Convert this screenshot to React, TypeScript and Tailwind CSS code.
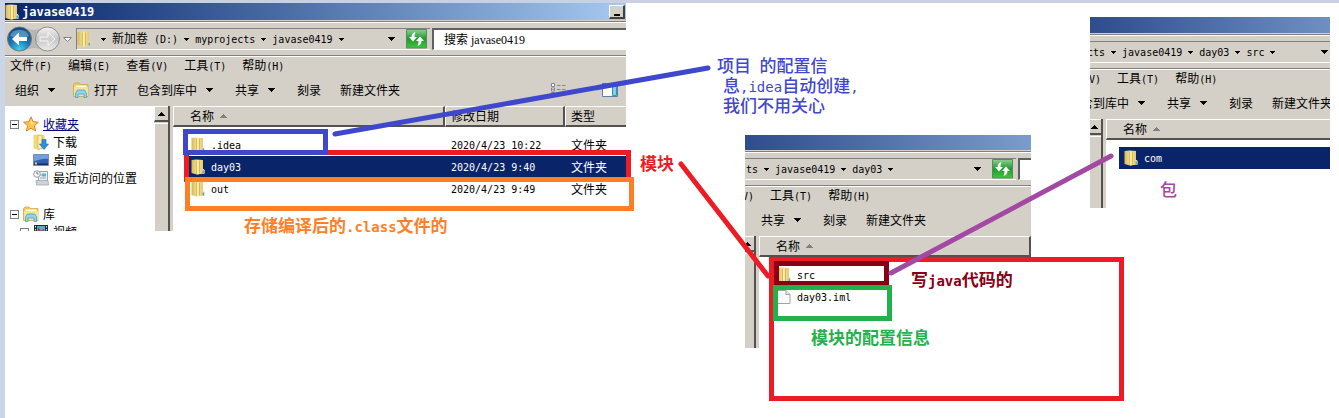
import { Fragment, ReactNode } from "react";

const CJK = "font-['Noto_Sans_CJK_SC',sans-serif]";

/* Latin runs are set in a half-width mono face beside full-width CJK. */
function T({ children, large = false }: { children: string; large?: boolean }) {
  const runs = children.split(/([\x20-\x7e]+)/).filter(Boolean);
  return (
    <>
      {runs.map((run, i) =>
        /^[\x20-\x7e]/.test(run) ? (
          <span
            key={i}
            className={
              large
                ? "whitespace-pre font-['DejaVu_Sans_Mono',monospace] text-[14px] leading-none"
                : "whitespace-pre font-['DejaVu_Sans_Mono',monospace] text-[10px]"
            }
          >
            {run}
          </span>
        ) : (
          <Fragment key={i}>{run}</Fragment>
        ),
      )}
    </>
  );
}

function Folder() {
  return (
    <svg width="14" height="16" viewBox="0 0 14 16" className="shrink-0" aria-hidden="true">
      <defs>
        <linearGradient id="folderBack" x1="0" x2="1">
          <stop offset="0" stopColor="#d9b950" />
          <stop offset="0.5" stopColor="#f8e9a0" />
          <stop offset="1" stopColor="#e2c25c" />
        </linearGradient>
        <linearGradient id="folderFace" x1="0" x2="1">
          <stop offset="0" stopColor="#fdf6c4" />
          <stop offset="1" stopColor="#e6c968" />
        </linearGradient>
      </defs>
      <path d="M.5 1 5 .5l7 .5v9l1.500 1v3.500L6 15.500l-2-.5-3.500-1z" fill="url(#folderBack)" />
      <path d="m5.500 1.500 6-.5v13l-5 1.500-1-1z" fill="url(#folderFace)" />
      <path d="M5.500 1.500v13.500M8.500 1.500V14.500" stroke="#c8a641" strokeWidth="0.7" />
      <path d="M11.500 9.500 13.500 11v3.500l-2 .5z" fill="#f3e8b4" />
      <path d="M11.500 11.500H13v3h-1.500z" fill="#4ea3da" />
    </svg>
  );
}

function OpenFolder() {
  return (
    <svg width="16" height="16" viewBox="0 0 16 16" className="shrink-0" aria-hidden="true">
      <path d="M.5 2.500 2 1h4l1.500 1.500H15v12H.5z" fill="#e9ca60" stroke="#c9a43c" strokeWidth="0.7" />
      <path d="M2.500 3.500h11V8h-11z" fill="#fffdf0" />
      <path d="M1 5h14v9H1z" fill="#f8e391" />
      <path d="M2.500 15.500V11l2-3h7l2 3v4.500H11V12H5v3.500z" fill="#8ed4f4" stroke="#3f97c8" strokeWidth="0.7" />
    </svg>
  );
}

function Star() {
  return (
    <svg width="16" height="16" viewBox="0 0 16 16" className="shrink-0" aria-hidden="true">
      <path
        d="m8 .8 2.100 4.900 5.300.5-4 3.500 1.200 5.300L8 12.200 3.400 15l1.200-5.300-4-3.500 5.300-.5z"
        fill="#ffc648"
        stroke="#e3822c"
      />
      <path d="m8 3 1.300 3.500 3.200.5L8 8.500z" fill="#ffe9a0" />
    </svg>
  );
}

function Downloads() {
  return (
    <svg width="16" height="16" viewBox="0 0 16 16" className="shrink-0" aria-hidden="true">
      <path d="M.5 1 5 .5l6.500.5v13.500L5 15.500l-4.500-1z" fill="#f0d978" />
      <path d="m5 1.500 4-.5v13.500l-4 1z" fill="#fbf0b0" stroke="#cdab46" strokeWidth="0.6" />
      <path d="M9 5.500h4V10h2.500L11 15.500 6.500 10H9z" fill="#2f91dd" stroke="#1766ad" strokeWidth="0.6" />
    </svg>
  );
}

function DesktopIcon() {
  return (
    <svg width="16" height="16" viewBox="0 0 16 16" className="shrink-0" aria-hidden="true">
      <path d="M.5 2.500h15v11H.5z" fill="#2f62b5" stroke="#7b8ba8" />
      <path d="M1 3h14v4C9 6 5 9 1 9z" fill="#6ea0df" />
      <path d="M1 11.500h14v1.500H1z" fill="#1b2f5c" />
      <path d="M2 10.500h2v2H2z" fill="#f6d442" />
    </svg>
  );
}

function Recent() {
  return (
    <svg width="16" height="16" viewBox="0 0 16 16" className="shrink-0" aria-hidden="true">
      <path d="M5.500 1.500h9v12h-9z" fill="#eef1f4" stroke="#9aa4ae" />
      <path d="M7 8h6M7 5h6" stroke="#7fa9cc" />
      <path d="M9 3.500h4v3H9z" fill="#62b0d8" />
      <path d="M3 10.500h12l.5 4.500H3.500z" fill="#cdd3d9" stroke="#98a1aa" strokeWidth="0.7" />
      <circle cx="4" cy="4" r="3.300" fill="#fff" stroke="#8f9aa5" />
      <path d="M4 2v2h1.500" stroke="#48525c" strokeWidth="0.8" fill="none" />
    </svg>
  );
}

function VideoIcon() {
  return (
    <svg width="16" height="16" viewBox="0 0 16 16" className="shrink-0" aria-hidden="true">
      <path d="M1 1h14v14H1z" fill="#23292e" />
      <path d="M4 2h8v12H4z" fill="#58a9cf" />
      <path d="m5 3 3 4 3-2v6H5z" fill="#a64336" />
      <path d="M2.500 2v13M13.500 2v13" stroke="#e6e6e6" strokeDasharray="1.500 1.500" />
    </svg>
  );
}

function Page() {
  return (
    <svg width="14" height="16" viewBox="0 0 14 16" className="shrink-0" aria-hidden="true">
      <path d="M.5 1.500H9l4 4v9H.5z" fill="#fafafa" stroke="#a3a3a3" />
      <path d="M9 1.500v4h4" fill="#e6e6e6" stroke="#a3a3a3" />
    </svg>
  );
}

function Caret({ size = "small" }: { size?: "small" | "big" }) {
  return size === "small" ? (
    <svg width="5" height="3" viewBox="0 0 5 3" className="shrink-0" shapeRendering="crispEdges" aria-hidden="true">
      <path d="M0 0h5v1H0zM1 1h3v1H1zM2 2h1v1H2z" />
    </svg>
  ) : (
    <svg width="7" height="4" viewBox="0 0 7 4" className="shrink-0" shapeRendering="crispEdges" aria-hidden="true">
      <path d="M0 0h7v1H0zM1 1h5v1H1zM2 2h3v1H2zM3 3h1v1H3z" />
    </svg>
  );
}

function UpArrow({ className }: { className: string }) {
  return (
    <svg width="7" height="4" viewBox="0 0 7 4" className={className} shapeRendering="crispEdges" aria-hidden="true">
      <path d="M3 0h1v1H3zM2 1h3v1H2zM1 2h5v1H1zM0 3h7v1H0z" fill="currentColor" />
    </svg>
  );
}

function NavButtons() {
  return (
    <div className="relative flex w-[71px] shrink-0 items-center pl-[2px]">
      <svg width="68" height="26" viewBox="0 0 68 26" aria-hidden="true" className="-my-1 shrink-0">
        <defs>
          <radialGradient id="orb" cx="0.5" cy="0.95" r="0.9">
            <stop offset="0" stopColor="#42d3f6" />
            <stop offset="0.5" stopColor="#1c76b4" />
            <stop offset="1" stopColor="#14477f" />
          </radialGradient>
          <linearGradient id="orbOff" x1="0" x2="0" y1="0" y2="1">
            <stop offset="0" stopColor="#f4f4f4" />
            <stop offset="0.5" stopColor="#c6c6c6" />
            <stop offset="1" stopColor="#ececec" />
          </linearGradient>
        </defs>
        <path d="M12 1c6 0 10 3 15 3S36 1 41 1v24c-5 0-9-3-14-3s-9 3-15 3z" fill="#b7b7b5" />
        <circle cx="12.500" cy="13" r="12" fill="url(#orb)" stroke="#6d7780" />
        <path d="M3 10a10 9 0 0 1 19 0q-9 4-19 0" fill="#8fc2e4" opacity="0.5" />
        <path d="M12 6.500 5 13l7 6.500v-4.500h8v-4h-8z" fill="#fff" />
        <circle cx="40.500" cy="13" r="12" fill="url(#orbOff)" stroke="#8d8d8d" />
        <path d="m41 6.500 7 6.500-7 6.500v-4.500h-8v-4h8z" fill="#d0d0d0" stroke="#f8f8f8" />
        <path d="M56.500 11.500h8l-4 4z" fill="#fff" stroke="#7d8792" />
      </svg>
      <button aria-label="后退" className="absolute left-[2px] size-6 rounded-full" />
      <button aria-label="前进" className="absolute left-[30px] size-6 rounded-full" />
    </div>
  );
}

function Refresh() {
  return (
    <button aria-label="刷新" className="mr-[3px] h-5 w-[21px] shrink-0">
      <svg width="21" height="20" viewBox="0 0 21 20" aria-hidden="true">
        <defs>
          <linearGradient id="green" x1="0" x2="0" y1="0" y2="1">
            <stop offset="0" stopColor="#8ed092" />
            <stop offset="0.5" stopColor="#1f9a2c" />
            <stop offset="1" stopColor="#3fc63d" />
          </linearGradient>
        </defs>
        <path d="M.5.5h20v18.500H.5z" fill="url(#green)" stroke="#5b8a5e" />
        <path d="M9.500 3Q5.500 4 5.500 8H3l4 4.500L11 8H8.500q0-2.500 1-5z" fill="#fff" />
        <path d="M11.500 17q4-1 4-5H18l-4-4.500-4 4.500h2.500q0 2.500-1 5z" fill="#fff" />
      </svg>
    </button>
  );
}

function Crumbs({ items }: { items: string[] }) {
  return (
    <nav className="flex items-center gap-[6px]">
      {items.map((item) => (
        <Fragment key={item}>
          <button className="whitespace-nowrap">
            <T>{item}</T>
          </button>
          <Caret />
        </Fragment>
      ))}
    </nav>
  );
}

/* Dark line over light line, the classic etched separator. */
function Etched() {
  return <div className="h-[2px] shrink-0 border-b border-white bg-[#808080]" />;
}

function MenuBar({ items, className = "pl-[5px]" }: { items: string[]; className?: string }) {
  return (
    <div className={`flex h-[18px] items-center gap-4 ${className}`}>
      {items.map((item) => (
        <button key={item} className="shrink-0 whitespace-nowrap">
          <T>{item}</T>
        </button>
      ))}
    </div>
  );
}

function Command({ label, menu = false, icon }: { label: string; menu?: boolean; icon?: ReactNode }) {
  return (
    <button
      className={
        menu
          ? "flex shrink-0 items-center gap-[9px] pr-[3px] whitespace-nowrap"
          : "flex shrink-0 items-center gap-[5px] whitespace-nowrap"
      }
    >
      {icon}
      {label}
      {menu && <Caret size="big" />}
    </button>
  );
}

function ScrollBar({ className }: { className: string }) {
  return (
    <div className={`flex shrink-0 flex-col items-end overflow-hidden border-r-2 border-[#55524e] bg-[#d4d0c8] ${className}`}>
      <button
        aria-label="向上滚动"
        className="flex h-4 w-[14px] shrink-0 items-center justify-center border-t border-b-2 border-l border-t-white border-b-[#55524e] border-l-white"
      >
        <UpArrow className="text-black" />
      </button>
      <div className="mt-px w-[14px] flex-1 border-t border-l border-white" />
    </div>
  );
}

type Row = { name: string; date?: string; type?: string; selected?: boolean; page?: boolean };

function FileTable({ rows, detailed = false, openEnd = false }: { rows: Row[]; detailed?: boolean; openEnd?: boolean }) {
  const head = "border-t border-b-2 border-l border-t-white border-b-[#55524e] border-l-white bg-[#d4d0c8] p-0 text-left font-normal";
  return (
    <div className="ml-[3px] min-w-0 flex-1 overflow-hidden bg-white">
      <table className="w-full table-fixed border-separate border-spacing-0">
        <thead>
          <tr className="h-[21px] leading-[18px]">
            <th className={openEnd ? head : `${head} border-r-2 border-r-[#55524e]`}>
              <span className="flex items-center gap-[6px] pl-4">
                名称
                <UpArrow className="text-[#808080]" />
              </span>
            </th>
            {detailed && (
              <>
                <th className={`${head} w-[120px] border-r-2 border-r-[#55524e] pl-[5px]`}>修改日期</th>
                <th className={`${head} w-[61px] pl-[5px]`}>类型</th>
              </>
            )}
          </tr>
        </thead>
        <tbody>
          <tr aria-hidden="true" className="h-[7px]">
            <td className="p-0" />
          </tr>
          {rows.map((row) => (
            <tr key={row.name} className={row.selected ? "h-[22px] text-white" : "h-[22px]"}>
              <td className="p-0 pl-[13px]">
                <span
                  className={
                    row.selected ? "flex h-[22px] items-center gap-[6px] bg-[#0a246a] pl-[5px]" : "flex h-[22px] items-center gap-[6px] pl-[5px]"
                  }
                >
                  {row.page ? <Page /> : <Folder />}
                  <span>
                    <T>{row.name}</T>
                  </span>
                </span>
              </td>
              {detailed && (
                <>
                  <td className={row.selected ? "bg-[#0a246a] p-0 pl-[6px]" : "p-0 pl-[6px]"}>
                    <T>{row.date ?? ""}</T>
                  </td>
                  <td className={row.selected ? "bg-[#0a246a] p-0 pl-[6px]" : "p-0 pl-[6px]"}>{row.type}</td>
                </>
              )}
            </tr>
          ))}
        </tbody>
      </table>
    </div>
  );
}

function Expander() {
  return (
    <svg width="9" height="9" viewBox="0 0 9 9" className="shrink-0" shapeRendering="crispEdges" aria-hidden="true">
      <path d="M.5.5h8v8h-8z" fill="#fff" stroke="#808080" />
      <path d="M2 4h5v1H2z" />
    </svg>
  );
}

function Sidebar() {
  const leaf = "flex h-[18px] items-center gap-1 pl-7";
  return (
    <aside className="w-[149px] shrink-0 overflow-hidden bg-white pt-[9px]">
      <ul>
        <li className="flex h-[18px] items-center gap-1 pl-[5px]">
          <Expander />
          <Star />
          <a href="#favorites" className="text-[#000080] underline">
            收藏夹
          </a>
        </li>
        <li className={leaf}>
          <Downloads />
          下载
        </li>
        <li className={leaf}>
          <DesktopIcon />
          桌面
        </li>
        <li className={leaf}>
          <Recent />
          最近访问的位置
        </li>
        <li className="mt-[18px] flex h-[18px] items-center gap-1 pl-[5px]">
          <Expander />
          <OpenFolder />
          库
        </li>
        <li className="flex h-[18px] items-center gap-1 pl-[15px]">
          <Expander />
          <VideoIcon />
          视频
        </li>
      </ul>
    </aside>
  );
}

function ViewIcons() {
  return (
    <div className="ml-auto flex items-center gap-9 pr-2">
      <button aria-label="更改视图">
        <svg width="16" height="14" viewBox="0 0 16 14" aria-hidden="true">
          <path d="M1.500.5h3v3h-3zM1.500 5h3v3h-3zM1.500 9.500h3v3h-3z" fill="#fff" stroke="#7a8794" />
          <path d="M7 2.500h3.500M12 2.500h3.500M7 6.500h3.500M12 6.500h3.500M7 11h3.500M12 11h3.500" stroke="#7a8794" />
          <path d="M2.500 6h1v1h-1z" fill="#c33" />
        </svg>
      </button>
      <button aria-label="显示预览窗格">
        <svg width="16" height="14" viewBox="0 0 16 14" aria-hidden="true">
          <path d="M.5.5h15v13H.5z" fill="#fff" stroke="#5b80a5" />
          <path d="M0 0h16v3H0z" fill="#4a7db5" />
          <path d="M10.500 3.500h4v9h-4z" fill="#7fd0ea" stroke="#3b8fb5" />
        </svg>
      </button>
    </div>
  );
}

const shell = "absolute flex flex-col overflow-hidden bg-[#d4d0c8]";
const addressBox =
  "flex h-[22px] min-w-0 items-center border-t border-b border-t-[#808080] border-b-white";
const toolbar = "flex h-[31px] shrink-0 items-center gap-[19px] pb-[2px]";

function ProjectWindow() {
  return (
    <section className={`${shell} top-[3px] left-[5px] h-[228px] w-[621px]`}>
      <header className="flex h-[17px] shrink-0 items-center gap-[3px] bg-linear-to-r from-[#0a246a] to-[#a6caf0] text-white">
        <Folder />
        <h1 className="font-['DejaVu_Sans_Mono',monospace] text-[12px] leading-4 font-bold">javase0419</h1>
        <button
          aria-label="最小化"
          className="mr-px ml-auto flex h-[14px] w-4 items-end justify-center border-t border-r-2 border-b-2 border-l border-t-white border-r-[#404040] border-b-[#404040] border-l-white bg-[#d4d0c8] pb-px"
        >
          <span className="h-[2px] w-[6px] bg-black" />
        </button>
      </header>
      <div className="pt-px">
        <Etched />
      </div>
      <div className="mt-[5px] flex h-[22px] shrink-0">
        <NavButtons />
        <div className={`${addressBox} w-[354px] shrink-0 border-l border-l-[#808080]`}>
          <Folder />
          <span className="mx-[6px] ml-[10px] flex">
            <Caret />
          </span>
          <Crumbs items={["新加卷 (D:)", "myprojects", "javase0419"]} />
          <span className="mr-[11px] ml-auto">
            <Caret size="big" />
          </span>
          <Refresh />
        </div>
        <input
          aria-label="搜索"
          defaultValue="搜索 javase0419"
          className="ml-[2px] min-w-0 flex-1 border-t-2 border-b border-l-2 border-t-[#606060] border-b-white border-l-[#606060] bg-white pl-[10px] font-['Liberation_Serif','Noto_Sans_CJK_SC',serif] text-[12px] outline-none"
        />
      </div>
      <div className="pt-[5px]">
        <Etched />
      </div>
      <MenuBar items={["文件(F)", "编辑(E)", "查看(V)", "工具(T)", "帮助(H)"]} />
      <div className={`${toolbar} pl-[10px]`}>
        <Command label="组织" menu />
        <span className="-ml-1 flex">
          <Command label="打开" icon={<OpenFolder />} />
        </span>
        <Command label="包含到库中" menu />
        <Command label="共享" menu />
        <Command label="刻录" />
        <Command label="新建文件夹" />
        <ViewIcons />
      </div>
      <div className="flex min-h-0 flex-1">
        <Sidebar />
        <ScrollBar className="w-4" />
        <FileTable
          detailed
          rows={[
            { name: ".idea", date: "2020/4/23 10:22", type: "文件夹" },
            { name: "day03", date: "2020/4/23 9:40", type: "文件夹", selected: true },
            { name: "out", date: "2020/4/23 9:49", type: "文件夹" },
          ]}
        />
      </div>
    </section>
  );
}

function ModuleWindow() {
  return (
    <section className={`${shell} top-[135px] left-[745px] h-[213px] w-[286px]`}>
      <header className="h-[15px] shrink-0 bg-linear-to-r from-[#2f4c8c] to-[#7c9ccc]" />
      <div className="pt-px">
        <Etched />
      </div>
      <div className="mt-[5px] flex h-[22px] shrink-0">
        <div className={`${addressBox} flex-1 pl-px`}>
          <Crumbs items={["ts", "javase0419", "day03"]} />
          <span className="mr-[11px] ml-auto">
            <Caret size="big" />
          </span>
          <Refresh />
        </div>
        <input
          aria-label="搜索"
          className="ml-[2px] w-[13px] border-t-2 border-b border-l-2 border-t-[#606060] border-b-white border-l-[#606060] bg-white"
        />
      </div>
      <div className="pt-[5px]">
        <Etched />
      </div>
      <MenuBar items={["V)", "工具(T)", "帮助(H)"]} className="-ml-[3px]" />
      <div className={`${toolbar} pl-4`}>
        <Command label="共享" menu />
        <Command label="刻录" />
        <Command label="新建文件夹" />
      </div>
      <div className="flex min-h-0 flex-1">
        <ScrollBar className="w-[11px]" />
        <FileTable rows={[{ name: "src" }, { name: "day03.iml", page: true }]} />
      </div>
    </section>
  );
}

function PackageWindow() {
  return (
    <section className={`${shell} top-[17px] left-[1090px] h-[191px] w-[240px]`}>
      <header className="h-4 shrink-0 bg-linear-to-r from-[#2f4c8c] to-[#6f90c2]" />
      <div className="pt-px">
        <Etched />
      </div>
      <div className="mt-[5px] flex h-[22px] shrink-0">
        <div className={`${addressBox} flex-1 pr-[2px]`}>
          <div className="-ml-[3px]">
            <Crumbs items={["cts", "javase0419", "day03", "src"]} />
          </div>
          <span className="ml-auto">
            <Caret size="big" />
          </span>
        </div>
      </div>
      <div className="pt-[5px]">
        <Etched />
      </div>
      <MenuBar items={["V)", "工具(T)", "帮助(H)"]} className="-ml-px" />
      <div className={`${toolbar} -ml-[21px]`}>
        <Command label="包含到库中" menu />
        <Command label="共享" menu />
        <Command label="刻录" />
        <Command label="新建文件夹" />
      </div>
      <div className="flex min-h-0 flex-1">
        <ScrollBar className="w-[13px]" />
        <FileTable openEnd rows={[{ name: "com", selected: true }]} />
      </div>
    </section>
  );
}

function Note({ className, children }: { className: string; children: ReactNode }) {
  return <p className={`absolute text-[17px] leading-5 whitespace-nowrap ${className}`}>{children}</p>;
}

export default function App() {
  return (
    <main
      className={`relative min-h-screen overflow-hidden border-t-[3px] border-l-[5px] border-t-[#c8d0e2] border-l-[#cbd5e8] bg-white text-[12px] leading-4 text-black ${CJK}`}
    >
      <div className="absolute -top-[3px] -left-[5px]">
        <ProjectWindow />
        <ModuleWindow />
        <PackageWindow />

        <div className="absolute top-[150px] left-[184px] h-8 w-[447px] border-5 border-[#ed1c24]" />
        <div className="absolute top-[129px] left-[183px] h-[26px] w-[145px] border-5 border-[#3f48cc]" />
        <div className="absolute top-[177px] left-[185px] h-[34px] w-[449px] border-5 border-[#ff7f27]" />
        <div className="absolute top-[257px] left-[769px] h-[144px] w-[355px] border-5 border-[#ed1c24]" />
        <div className="absolute top-[261px] left-[774px] h-[25px] w-[115px] border-5 border-[#880015]" />
        <div className="absolute top-[285px] left-[773px] h-[36px] w-[119px] border-5 border-[#22b14c]" />

        <svg width="1339" height="418" viewBox="0 0 1339 418" className="pointer-events-none absolute top-0 left-0 max-w-none" aria-hidden="true">
          <g strokeWidth="5" strokeLinecap="round">
            <path d="M335 134 708 68" stroke="#3f48cc" />
            <path d="m681 164 87 112" stroke="#ed1c24" />
            <path d="m891 273 220-117" stroke="#a349a4" />
          </g>
        </svg>

        <Note className="top-[55px] left-[717px] font-medium text-[#3f48cc]">
          <T large>项目 的配置信</T>
          <span className="block pl-[6px]">
            <T large>息,idea自动创建,</T>
          </span>
          <span className="block pl-[6px]">我们不用关心</span>
        </Note>
        <Note className="top-[153px] left-[640px] font-bold text-[#ed1c24]">模块</Note>
        <Note className="top-[215px] left-[244px] font-bold text-[#ff7f27]">
          <T large>存储编译后的.class文件的</T>
        </Note>
        <Note className="top-[269px] left-[911px] font-bold text-[#880015]">
          <T large>写java代码的</T>
        </Note>
        <Note className="top-[327px] left-[811px] font-bold text-[#22b14c]">模块的配置信息</Note>
        <Note className="top-[179px] left-[1160px] font-medium text-[#a349a4]">包</Note>
      </div>
    </main>
  );
}
